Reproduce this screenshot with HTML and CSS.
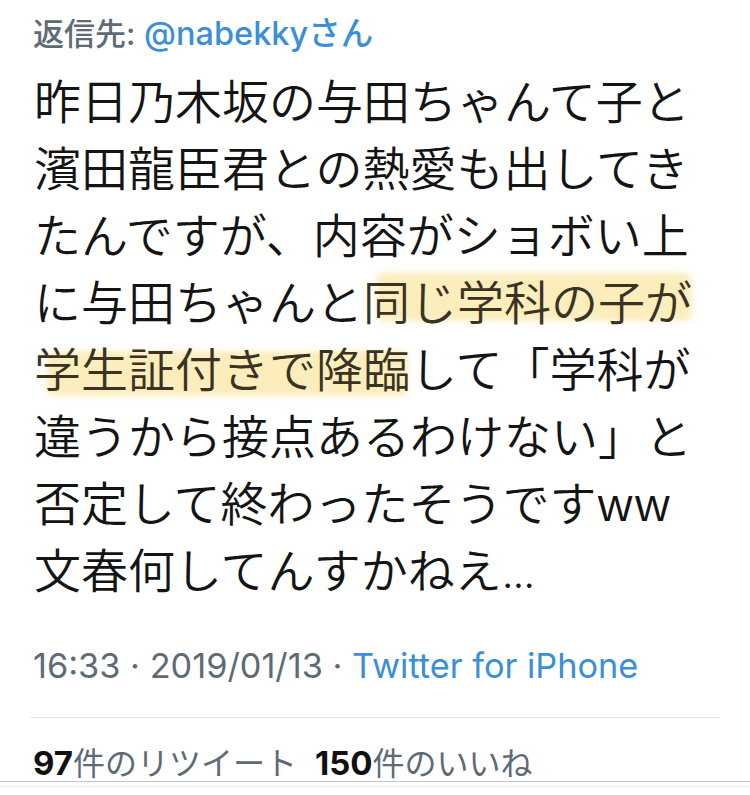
FILE: index.html
```html
<!DOCTYPE html>
<html lang="ja">
<head>
<meta charset="utf-8">
<link rel="stylesheet" href="styles.css">
</head>
<body>
<div class="tweet">
  <div class="reply-to"><span class="label">返信先:</span> <span class="link">@nabekkyさん</span></div>
  <p class="body">昨日乃木坂の与田ちゃんて子と<br>濱田龍臣君との熱愛も出してき<br>たんですが、内容がショボい上<br>に与田ちゃんと<span class="mark mark-a">同じ学科の子が</span><br><span class="mark mark-b">学生証付きで降臨</span>して「学科が<br>違うから接点あるわけない」と<br>否定して終わったそうですww<br>文春何してんすかねえ<span class="ell">...</span></p>
  <div class="meta">16:33 · 2019/01/13 · <span class="link">Twitter for iPhone</span></div>
  <div class="sep"></div>
  <div class="stats"><b>97</b>件のリツイート&nbsp;&nbsp;<b>150</b>件のいいね</div>
  <div class="rule"></div>
  <div class="rule2"></div>
</div>
</body>
</html>
```

FILE: styles.css
```css
html, body {
  margin: 0;
  padding: 0;
  background: #ffffff;
}
body {
  width: 750px;
  height: 795px;
  overflow: hidden;
  font-family: Inter, "Noto Sans CJK JP", sans-serif;
}
.tweet {
  display: flex;
  flex-direction: column;
}
.reply-to {
  padding: 12px 0 0 33px;
  font-size: 32.5px;
  line-height: 44px;
  font-weight: 500;
  color: #5e6b77;
  white-space: nowrap;
}
.label {
  font-size: 31px;
}
.link {
  color: #3a8fd6;
}
.body {
  margin: 9px 0 0 0;
  padding-left: 34px;
  font-family: "Noto Sans CJK JP", sans-serif;
  font-size: 47px;
  line-height: 67px;
  font-weight: 350;
  color: #141414;
  white-space: nowrap;
}
.ell {
  font-family: Inter, sans-serif;
  font-size: 42px;
  letter-spacing: -1px;
}
.mark {
  position: relative;
  z-index: 0;
  color: #3a3322;
}
.mark::before {
  content: "";
  position: absolute;
  z-index: -1;
  background: #fcedbd;
  filter: blur(3px);
  border-radius: 6px;
}
.mark-a::before {
  left: 14px;
  right: 0;
  top: 8px;
  height: 48px;
}
.mark-b::before {
  left: 13px;
  right: 2px;
  top: 19px;
  height: 45px;
}
.meta {
  margin-top: 40px;
  padding-left: 33px;
  font-size: 34.3px;
  line-height: 40px;
  color: #5e6b77;
  white-space: nowrap;
}
.sep {
  margin: 31px 30px 0 30px;
  height: 1px;
  background: #e3e3e3;
}
.stats {
  padding: 25px 0 0 33px;
  height: 38px;
  font-size: 32px;
  line-height: 40px;
  color: #5e6b77;
  white-space: nowrap;
}
.stats b {
  color: #111111;
  font-weight: 700;
  font-size: 33px;
}
.rule {
  height: 1px;
  background: #c6c6c6;
  box-shadow: 0 5px 0 0 #eeeeee;
}
.rule2 {
  margin: 16px 63px 0 63px;
  height: 1px;
  background: #f0f0f0;
}
```
